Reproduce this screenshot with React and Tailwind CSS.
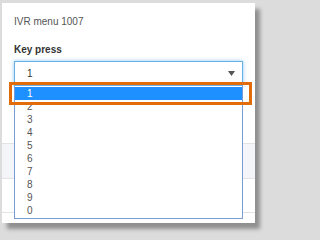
import React from "react";

const keys = ["1", "2", "3", "4", "5", "6", "7", "8", "9", "0"];

const KeySelect = ({ value }) => {
  return (
    <div className="relative mt-[5px]">
      <div className="flex h-[25px] items-center justify-between border border-[#66afe9] bg-white pl-[12px] pr-[7px] text-[10px] text-[#333] shadow-[0_0_4px_rgba(102,175,233,0.7)]">
        <span>{value}</span>
        <svg width="7" height="5" viewBox="0 0 7 5">
          <polygon points="0,0 7,0 3.5,5" fill="#555" />
        </svg>
      </div>
      <ul className="absolute left-0 right-0 top-full z-10 border-x border-b border-[#7b9bd6] bg-white pt-[1px] pb-[1px]">
        {keys.map((k, i) => (
          <li
            key={k}
            className={
              i === 0
                ? "h-[13px] bg-[#1e90ff] pl-[12px] text-[10px] leading-[13px] text-white"
                : "h-[13px] pl-[12px] text-[10px] leading-[13px] text-[#555]"
            }
          >
            {k}
          </li>
        ))}
      </ul>
      {/* callout around highlighted option */}
      <div className="absolute left-[-5px] top-[21px] z-20 h-[23px] w-[243px] border-[3px] border-[#e36c0a]"></div>
    </div>
  );
};

export default function App() {
  return (
    <div
      className="min-h-screen w-full overflow-hidden bg-[#dcdcdc] pt-[3px] pl-[2px]"
      style={{ fontFamily: '"Liberation Sans", Arial, sans-serif' }}
    >
      <div className="h-[220px] w-[253px] bg-white px-[12px] pt-[13px] shadow-[5px_6px_4px_rgba(0,0,0,0.35)]">
        <div className="text-[10px] leading-[12px] text-[#555]">IVR menu 1007</div>
        <div className="mt-[16px] text-[10px] font-bold leading-[12px] text-[#333]">Key press</div>
        <KeySelect value="1" />
        <div className="-mx-[12px] mt-[57px]">
          <div className="h-[35px] border-t border-[#e3e3e3] bg-[#f4f5f8]"></div>
          <div className="h-[34px] border-t border-[#e3e3e3]"></div>
          <div className="border-t border-[#e3e3e3]"></div>
        </div>
      </div>
    </div>
  );
}
